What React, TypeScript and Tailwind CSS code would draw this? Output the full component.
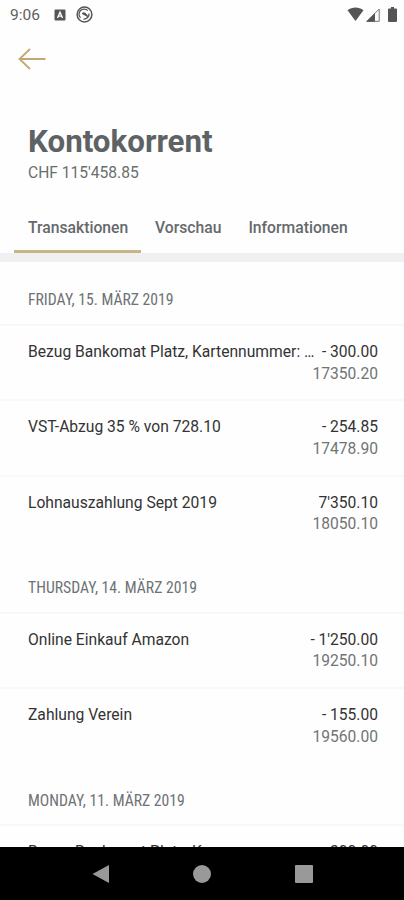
interface Transaction {
    id: number
    title: string
    amount: string
    balance: string
}

interface TransactionGroup {
    date: string
    items: Transaction[]
}

const groups: TransactionGroup[] = [
    {
        date: 'FRIDAY, 15. MÄRZ 2019',
        items: [
            { id: 1, title: 'Bezug Bankomat Platz, Kartennummer: …', amount: '- 300.00', balance: '17350.20' },
            { id: 2, title: 'VST-Abzug 35 % von 728.10', amount: '- 254.85', balance: '17478.90' },
            { id: 3, title: 'Lohnauszahlung Sept 2019', amount: "7'350.10", balance: '18050.10' },
        ],
    },
    {
        date: 'THURSDAY, 14. MÄRZ 2019',
        items: [
            { id: 4, title: 'Online Einkauf Amazon', amount: "- 1'250.00", balance: '19250.10' },
            { id: 5, title: 'Zahlung Verein', amount: '- 155.00', balance: '19560.00' },
        ],
    },
    {
        date: 'MONDAY, 11. MÄRZ 2019',
        items: [
            { id: 6, title: 'Bezug Bankomat Platz, K', amount: '- 300.00', balance: '19715.00' },
        ],
    },
]

const tabs = ['Transaktionen', 'Vorschau', 'Informationen']

function StatusBar() {
    return (
        <div className="flex h-[30px] shrink-0 items-center pb-px pl-[10px] pr-[7px] text-[#5f5f5f]">
            <span className="w-[44px] text-[15.5px] leading-[30px]">9:06</span>
            <svg className="h-3 w-3" viewBox="0 0 12 12">
                <rect x="0.5" y="0.5" width="11" height="11" rx="1" fill="#555" />
                <path d="M3.5 9 6 3.2 8.5 9M4.4 7.2h3.2" fill="none" stroke="#fff" strokeWidth="1.3" />
            </svg>
            <svg className="ml-[10px] h-[17px] w-[17px]" viewBox="0 0 17 17" fill="none" stroke="#555">
                <circle cx="8.5" cy="8.5" r="7.4" strokeWidth="1.5" />
                <path d="M4.5 11.8A5 5 0 0 1 11.8 4.6M13 7.5a5 5 0 0 1-5.5 5.5" strokeWidth="1.3" />
                <path d="M6 7.5C7.5 6.2 10 6.4 12 10.8z" fill="#555" strokeWidth="0.9" />
            </svg>
            <div className="ml-auto flex items-center">
                <svg className="h-[15px] w-[17px]" viewBox="0 0 17 15">
                    <path d="M.5 3.2C5.2-.3 11.8-.3 16.5 3.2L8.5 14z" fill="#555" />
                </svg>
                <svg className="ml-[2px] h-[14px] w-[14px]" viewBox="0 0 14 14">
                    <path d="M1 13.3 13.2 1v12.3z" fill="none" stroke="#666" strokeWidth="0.9" />
                    <path d="M0 13.8 9 5v8.8z" fill="#555" />
                </svg>
                <svg className="ml-[8px] h-[15px] w-[9px]" viewBox="0 0 9 15">
                    <path d="M3 0h3v1.5h2a1 1 0 0 1 1 1V14a1 1 0 0 1-1 1H1a1 1 0 0 1-1-1V2.5a1 1 0 0 1 1-1h2z" fill="#555" />
                </svg>
            </div>
        </div>
    )
}

function TransactionRow({ item }: { item: Transaction }) {
    return (
        <div className="flex h-[75.3px] items-start border-t-2 border-[#f7f8f8] pl-7 pr-[26px] pt-[16px] leading-[21.5px]">
            <span className="-mt-px min-w-0 flex-1 whitespace-nowrap text-[15.65px] text-[#333]">{item.title}</span>
            <div className="shrink-0 whitespace-nowrap text-right text-[15.6px]">
                <p className="text-[#333]">{item.amount}</p>
                <p className="text-[#717474]">{item.balance}</p>
            </div>
        </div>
    )
}

function NavBar() {
    return (
        <div className="grid h-[53px] shrink-0 grid-cols-3 items-center bg-black px-[50px]">
            <svg className="h-5 w-[18px] justify-self-center" viewBox="0 0 18 20">
                <path d="M0.5 10 17 1v18z" fill="#999" />
            </svg>
            <div className="h-[18px] w-[18px] justify-self-center rounded-full bg-[#999]" />
            <div className="ml-px h-[18px] w-[18px] justify-self-center rounded-[1px] bg-[#999]" />
        </div>
    )
}

export default function App() {
    return (
        <div className="flex h-[900px] w-[404px] flex-col overflow-hidden bg-[#fefefe] font-['Roboto',sans-serif]">
            <StatusBar />
            <header className="shrink-0">
                <button className="ml-[18px] mt-[18px] block h-[22px] w-7" aria-label="Zurück">
                    <svg className="h-[22px] w-7" viewBox="0 0 28 22" fill="none" stroke="#c3a874" strokeWidth="1.8">
                        <path d="M27.5 11H1.5M12 1 1.5 11 12 21" />
                    </svg>
                </button>
                <h1 className="ml-7 mt-[52px] text-[31.3px] font-bold leading-[40px] text-[#5d6365]">Kontokorrent</h1>
                <p className="ml-7 text-[15.6px] leading-[22px] text-[#6b6e6f]">CHF 115'458.85</p>
                <nav className="ml-[14px] mt-[17px] flex h-[52px]">
                    {tabs.map((tab, index) => (
                        <button
                            key={tab}
                            className={
                                index === 0
                                    ? 'w-[127px] border-b-[3px] border-[#c9b389] pl-[14px] pt-[4px] text-left text-[15.7px] font-medium text-[#65696b]'
                                    : 'border-b-[3px] border-transparent pl-[14px] pr-[13px] pt-[4px] text-[15.7px] font-medium text-[#65696b]'
                            }
                        >
                            {tab}
                        </button>
                    ))}
                </nav>
                <div className="h-[9px] bg-[#eef0f1]" />
            </header>
            <main className="min-h-0 flex-1 overflow-hidden">
                {groups.map((group) => (
                    <section key={group.date}>
                        <h2 className="flex h-[62px] items-center pl-7 pt-[14px] text-[15.7px] text-[#6e7274]">
                            <span className="whitespace-nowrap [font-stretch:75%]">{group.date}</span>
                        </h2>
                        {group.items.map((item) => (
                            <TransactionRow key={item.id} item={item} />
                        ))}
                    </section>
                ))}
            </main>
            <NavBar />
        </div>
    )
}
